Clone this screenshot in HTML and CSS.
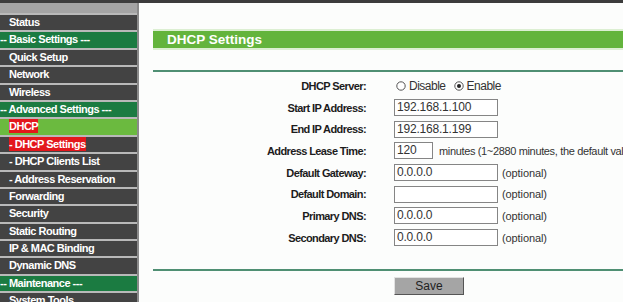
FILE: index.html
```html
<!doctype html>
<html>
<head>
<meta charset="utf-8">
<title>DHCP Settings</title>
<link rel="stylesheet" href="styles.css">
</head>
<body>
<div class="topbar"></div>
<div class="page">
	<ul class="menu">
		<li class="menu-cap"></li>
		<li class="item">Status</li>
		<li class="item group">-- Basic Settings ---</li>
		<li class="item">Quick Setup</li>
		<li class="item">Network</li>
		<li class="item">Wireless</li>
		<li class="item group">-- Advanced Settings ---</li>
		<li class="item current"><span class="mark">DHCP</span></li>
		<li class="item"><span class="mark">- DHCP Settings</span></li>
		<li class="item">- DHCP Clients List</li>
		<li class="item">- Address Reservation</li>
		<li class="item">Forwarding</li>
		<li class="item">Security</li>
		<li class="item">Static Routing</li>
		<li class="item">IP &amp; MAC Binding</li>
		<li class="item">Dynamic DNS</li>
		<li class="item group">-- Maintenance ---</li>
		<li class="item">System Tools</li>
	</ul>
	<div class="main">
		<div class="title">DHCP Settings</div>
		<div class="rule"></div>
		<div class="form">
			<div class="label">DHCP Server:</div>
			<div class="field">
				<span class="radio"><svg width="10" height="10" viewBox="0 0 10 10"><circle cx="5" cy="5" r="4.2" fill="#fff" stroke="#555" stroke-width="1"/></svg>Disable</span>
				<span class="radio"><svg width="10" height="10" viewBox="0 0 10 10"><circle cx="5" cy="5" r="4.2" fill="#fff" stroke="#555" stroke-width="1"/><circle cx="5" cy="5" r="2" fill="#222"/></svg>Enable</span>
			</div>
			<div class="label">Start IP Address:</div>
			<div class="field"><span class="box">192.168.1.100</span></div>
			<div class="label">End IP Address:</div>
			<div class="field"><span class="box">192.168.1.199</span></div>
			<div class="label">Address Lease Time:</div>
			<div class="field"><span class="box short">120</span><span class="note">minutes (1~2880 minutes, the default value is 120)</span></div>
			<div class="label">Default Gateway:</div>
			<div class="field"><span class="box">0.0.0.0</span><span class="opt">(optional)</span></div>
			<div class="label">Default Domain:</div>
			<div class="field"><span class="box"></span><span class="opt">(optional)</span></div>
			<div class="label">Primary DNS:</div>
			<div class="field"><span class="box">0.0.0.0</span><span class="opt">(optional)</span></div>
			<div class="label">Secondary DNS:</div>
			<div class="field"><span class="box">0.0.0.0</span><span class="opt">(optional)</span></div>
		</div>
		<div class="rule bottom"></div>
		<div class="actions"><span class="btn">Save</span></div>
	</div>
</div>
</body>
</html>
```

FILE: styles.css
```css
*{ margin: 0; padding: 0; list-style: none; box-sizing: border-box;}
body{ width: 623px; height: 302px; overflow: hidden; background: #fcfdfc; font-family: "Liberation Sans", Arial, sans-serif;}
.topbar{ height: 3px; background: #3c3c3c;}
.page{ display: flex; height: 299px;}

.menu{ width: 139px; flex: none; background: #434343; border-right: 2px solid #8a8a8a; overflow: hidden;}
.menu-cap{ height: 10px; background: #a4a4a4;}
.menu .item{ height: 17.4px; line-height: 15.4px; border-top: 2px solid #b9b9b9; padding-left: 9px; color: #fff; font-size: 11px; font-weight: bold; letter-spacing: -0.5px; white-space: nowrap;}
.menu .group{ background: #1b7b41; padding-left: 0;}
.menu .current{ background: #6bba3f;}
.menu .mark{ background: #e3171c; padding: 1px 0;}

.main{ flex: 1; padding-left: 14px; overflow: hidden; white-space: nowrap;}
.title{ margin-top: 28px; height: 17px; line-height: 17px; background: #63b43c; color: #fff; font-size: 13.5px; font-weight: bold; padding-left: 14px; box-shadow: 0 -2px 0 #dcefd2, 0 2px 0 #dcefd2;}
.rule{ margin-top: 22px; height: 2px; background: #4f8f73;}
.rule.bottom{ margin-top: 20px;}

.form{ display: grid; grid-template-columns: 213px 1fr; grid-auto-rows: 21.7px; column-gap: 28px; align-items: center; margin-top: 3px;}
.label{ text-align: right; font-size: 11px; font-weight: bold; letter-spacing: -0.6px; color: #1c1c1c;}
.field{ display: flex; align-items: center; font-size: 11px; color: #333;}
.radio{ display: inline-flex; align-items: center; font-size: 12px; letter-spacing: -0.5px; margin-left: 2px; margin-right: 6px; color: #333;}
.radio svg{ margin-right: 3px;}
.box{ display: inline-block; flex: none; width: 104px; height: 17px; line-height: 15px; border: 1px solid #858585; background: #fff; padding-left: 2px; font-size: 12px; color: #333; letter-spacing: -0.2px;}
.box.short{ width: 39px;}
.note{ margin-left: 6px; letter-spacing: -0.35px; flex: none;}
.opt{ margin-left: 4px; letter-spacing: -0.1px;}

.actions{ padding: 6px 0 0 241px;}
.btn{ display: block; width: 70px; height: 18px; line-height: 16px; text-align: center; background: #a5a5a5; border: 1px solid; border-color: #e2e2e2 #555 #555 #e2e2e2; font-size: 12px; color: #222;}
```
